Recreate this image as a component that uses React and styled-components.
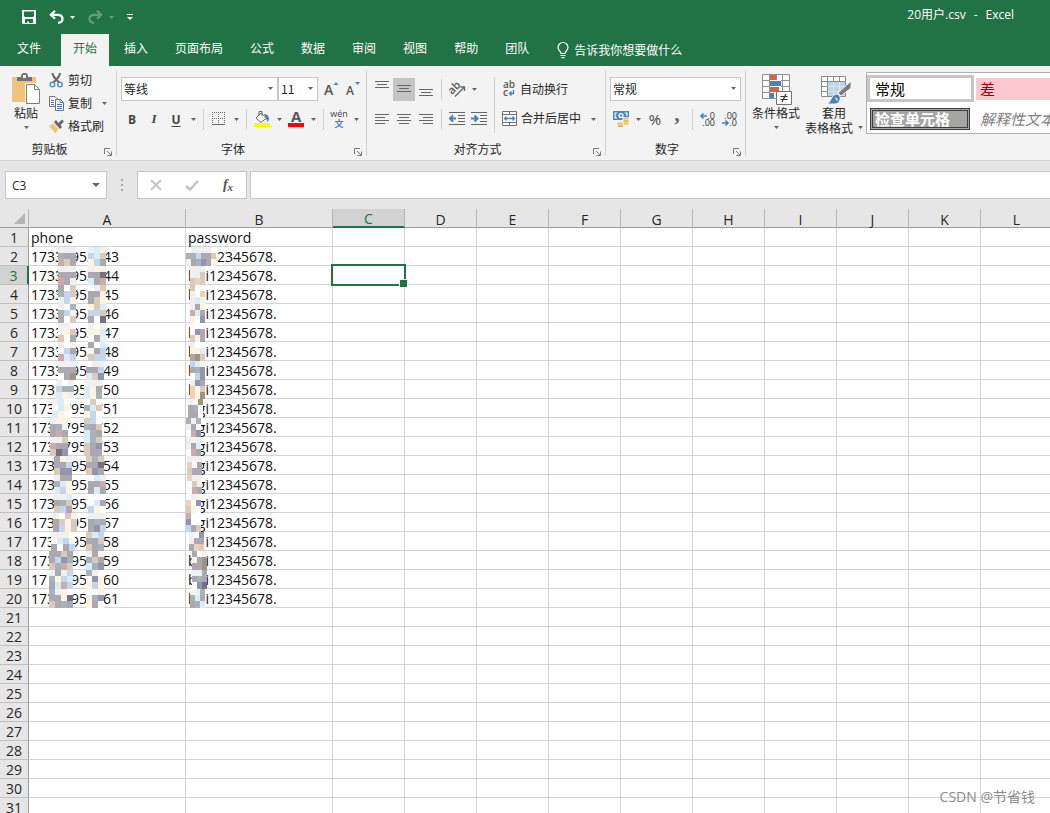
import React from "react";
import styled, { createGlobalStyle } from "styled-components";

const UI_FONT = `"Open Sans", "Noto Sans CJK SC", sans-serif`;
const CJK_FONT = `"Noto Sans CJK SC", sans-serif`;
const GREEN = "#217346";

const GlobalStyle = createGlobalStyle`
  * { box-sizing: border-box; }
  body { margin: 0; background: #e6e6e6; font: 12px/16px ${CJK_FONT}; color: #262626; overflow: hidden; }
  button, input, select { font: inherit; color: inherit; }
  button { border: 0; padding: 0; background: none; }
  svg { display: block; flex: none; overflow: visible; }
`;

const Window = styled.div`
  position: relative;
  display: flex;
  flex-direction: column;
  height: 100vh;
  overflow: hidden;
`;

/* title bar and tabs */
const Header = styled.header`
  background: ${GREEN};
  color: #fff;
`;
const TitleBar = styled.div`
  display: flex;
  align-items: center;
  justify-content: space-between;
  height: 34px;
  padding: 0 36px 4px 22px;
`;
const QuickAccess = styled.div`
  display: flex;
  align-items: center;
  gap: 13px;
  padding-top: 4px;
`;
const QuickButton = styled.button`
  display: flex;
  align-items: center;
  gap: 6px;
  opacity: ${(p) => (p.disabled ? 0.3 : 1)};
  color: #fff;
`;
const DocTitle = styled.div`
  display: flex;
  gap: 8px;
  font-family: ${UI_FONT};
`;
const Tabs = styled.nav`
  display: flex;
  height: 32px;
  padding-left: 5px;
  gap: 3px;
`;
const Tab = styled.button`
  padding: 0 12px 4px;
  margin-right: ${(p) => (p.$first ? 5 : 0)}px;
  background: ${(p) => (p.$active ? "#f3f3f3" : "none")};
  color: ${(p) => (p.$active ? GREEN : "#fff")};
`;
const TellMe = styled.button`
  display: flex;
  align-items: center;
  gap: 5px;
  margin-left: 13px;
  color: #fff;
`;

/* ribbon */
const Ribbon = styled.section`
  display: flex;
  height: 95px;
  background: #f3f3f3;
  border-bottom: 1px solid #d2d2d2;
  overflow: hidden;
`;
const Group = styled.div`
  display: flex;
  flex-direction: column;
  flex: none;
  width: ${(p) => p.$width}px;
  height: 86px;
  margin-top: 4px;
  border-right: 1px solid #d2d2d2;
`;
const GroupBody = styled.div`
  display: flex;
  flex: 1;
  padding-left: 4px;
`;
const GroupFooter = styled.div`
  display: flex;
  align-items: center;
  height: 14px;
  padding-right: 4px;
`;
const GroupLabel = styled.span`
  flex: 1;
  text-align: center;
`;
const Launcher = styled.button`
  padding: 6px 0 0 5px;
`;
const Stack = styled.div`
  display: flex;
  flex-direction: column;
  gap: 7px;
  padding-top: 7px;
`;
const ToolRow = styled.div`
  display: flex;
  align-items: center;
  height: ${(p) => p.$h || 24}px;
`;
const Tool = styled.button`
  display: flex;
  align-items: center;
  justify-content: center;
  width: 22px;
  height: 23px;
  background: ${(p) => (p.$on ? "#c5c5c5" : "none")};
  color: #444;
`;
const LetterTool = styled(Tool)`
  font: ${(p) => p.$italic ? `italic 700 13px "Liberation Serif", serif` : `700 12px ${UI_FONT}`};
  text-decoration: ${(p) => (p.$underline ? "underline" : "none")};
  text-underline-offset: 2px;
`;
const PercentTool = styled(Tool)`
  font: 400 15px ${UI_FONT};
`;
const CommaTool = styled(Tool)`
  padding-bottom: 10px;
  color: #666;
  font: 700 22px "Liberation Serif", serif;
`;
const SizeTools = styled.span`
  display: flex;
  margin-left: 2px;
`;
const MoreButton = styled.button`
  display: flex;
  align-items: center;
  justify-content: center;
  width: 12px;
  height: 22px;
`;
const Rule = styled.i`
  width: 1px;
  height: ${(p) => p.$h || 21}px;
  margin: 0 4px;
  background: #d2d2d2;
`;
const SelectBox = styled.span`
  position: relative;
  width: ${(p) => p.$width}px;
  height: 24px;
  svg { position: absolute; right: 5px; top: 10px; pointer-events: none; }
`;
const Select = styled.select`
  appearance: none;
  width: 100%;
  height: 100%;
  padding: 0 0 0 2px;
  border: 1px solid #c6c6c6;
  border-radius: 0;
  background: #fff;
`;
const LargeButton = styled.button`
  display: flex;
  flex-direction: column;
  align-items: center;
  flex: none;
  width: ${(p) => p.$width}px;
  padding-top: ${(p) => p.$top || 3}px;
  line-height: 15px;
`;
const LargeLabel = styled.span`
  display: flex;
  align-items: center;
  gap: 5px;
  height: 15px;
  white-space: nowrap;
`;
const TableIconBox = styled.span`
  padding: 2px 0 0 4px;
`;
const SmallList = styled.div`
  display: flex;
  flex-direction: column;
  gap: 3px;
  margin-left: 1px;
`;
const SmallButton = styled.button`
  display: flex;
  align-items: center;
  gap: 4px;
  height: 20px;
  padding-left: ${(p) => p.$left || 0}px;
  white-space: nowrap;
`;
const TrailingChevron = styled.span`
  margin-left: 6px;
`;
const MergeCell = styled.span`
  display: flex;
  gap: 6px;
`;
const StylesArea = styled.div`
  display: flex;
  flex: 1;
  min-width: 0;
`;
const Gallery = styled.div`
  display: grid;
  grid-template-columns: 107px 1fr;
  flex: 1;
  height: 62px;
  margin: 6px 0 0 4px;
  padding-top: 2px;
  border: 1px solid #b0b0b0;
  border-right: 0;
  background: #fff;
  overflow: hidden;
`;
const StyleCell = styled.button`
  height: 22px;
  margin: ${(p) => p.$margin || "0"};
  padding: 0 4px;
  text-align: left;
  font-size: 15px;
  line-height: 18px;
  white-space: nowrap;
`;
const NormalStyle = styled(StyleCell)`
  height: 27px;
  padding: 0 5px;
  border: 3px solid #c6c6c6;
  color: #000;
`;
const BadStyle = styled(StyleCell)`
  background: #ffc7ce;
  color: #9c0006;
`;
const CheckStyle = styled(StyleCell)`
  padding: 0 2px;
  border: 3px double #3f3f3f;
  background: #a5a5a5;
  color: #fff;
  font-weight: 700;
  line-height: 14px;
`;
const NoteStyle = styled(StyleCell)`
  color: #7f7f7f;
  font-style: italic;
  line-height: 14px;
`;

/* formula bar */
const FormulaBar = styled.section`
  display: flex;
  align-items: center;
  height: 48px;
  padding: 0 0 0 5px;
`;
const NameBox = styled.label`
  display: flex;
  align-items: center;
  width: 102px;
  height: 28px;
  padding: 0 6px;
  border: 1px solid #c6c6c6;
  background: #fff;
`;
const NameInput = styled.input`
  flex: 1;
  min-width: 0;
  padding: 0;
  border: 0;
  font: 12px ${UI_FONT};
`;
const Grip = styled.div`
  display: flex;
  flex-direction: column;
  gap: 3px;
  margin: 0 14px;
  i { width: 2px; height: 2px; background: #a8a8a8; }
`;
const FormulaButtons = styled.div`
  display: flex;
  height: 28px;
  border: 1px solid #c6c6c6;
  background: #fff;
`;
const FormulaButton = styled.button`
  display: flex;
  align-items: center;
  justify-content: center;
  width: 36px;
  color: #555;
  font: italic 700 14px "Liberation Serif", serif;
  small { font-size: 11px; padding-top: 3px; }
`;
const FormulaInput = styled.input`
  flex: 1;
  height: 28px;
  margin-left: 3px;
  border: 1px solid #c6c6c6;
  border-right: 0;
  background: #fff;
`;

/* worksheet */
const SheetArea = styled.main`
  flex: 1;
  min-height: 0;
  overflow: hidden;
`;
const Sheet = styled.table`
  table-layout: fixed;
  width: 100%;
  min-width: 1053px;
  border-collapse: separate;
  border-spacing: 0;
  font: 400 14px/16px ${UI_FONT};
  color: #111;
`;
const ColHead = styled.th`
  height: 19px;
  padding: 2px 0 0;
  line-height: 15px;
  font-weight: inherit;
  background: ${(p) => (p.$on ? "#d2d2d2" : "#e6e6e6")};
  color: ${(p) => (p.$on ? GREEN : "#262626")};
  border-right: 1px solid #b5b5b5;
  border-bottom: ${(p) => (p.$on ? `2px solid ${GREEN}` : "1px solid #9b9b9b")};
`;
const Corner = styled(ColHead)`
  padding: 0 3px 0 0;
  svg { margin-left: auto; }
`;
const RowHead = styled.th`
  height: 19px;
  padding: 2px 0 0;
  font-weight: inherit;
  background: ${(p) => (p.$on ? "#d2d2d2" : "#e6e6e6")};
  color: ${(p) => (p.$on ? GREEN : "#262626")};
  border-right: ${(p) => (p.$on ? `2px solid ${GREEN}` : "1px solid #9b9b9b")};
  border-bottom: 1px solid #c0c0c0;
`;
const Cell = styled.td`
  position: relative;
  height: 19px;
  padding: 2px 2px 0;
  background: #fff;
  border-right: 1px solid #d4d4d4;
  border-bottom: 1px solid #d4d4d4;
  white-space: nowrap;
`;
const Selection = styled.div`
  position: absolute;
  inset: -2px;
  z-index: 2;
  border: 2px solid ${GREEN};
  &::after {
    content: "";
    position: absolute;
    right: -4px;
    bottom: -4px;
    width: 7px;
    height: 7px;
    border: 1px solid #fff;
    background: ${GREEN};
  }
`;
const Hidden = styled.span`
  display: inline-block;
  width: 8px;
`;
const Prefix = styled.span`
  display: inline-flex;
  justify-content: space-between;
  width: 21px;
  height: 16px;
  vertical-align: top;
`;
const MaskLayer = styled.svg`
  position: absolute;
  left: 0;
  top: 0;
  z-index: 1;
`;
const Watermark = styled.div`
  position: absolute;
  right: 15px;
  bottom: 6px;
  z-index: 3;
  font: 14px/20px ${UI_FONT};
  color: #8c8c8c;
`;

/* small drawings */
const Chevron = ({ w = 5, color = "#666" }) => (
  <svg width={w} height={Math.ceil(w / 2)} viewBox="0 0 6 3" preserveAspectRatio="none">
    <path d="M0 0H6L3 3Z" fill={color} />
  </svg>
);
const LinesIcon = ({ rows }) => (
  <svg width="14" height="17" viewBox="0 0 14 17" stroke="#666">
    {rows.map(([x, y, w]) => <path key={y} d={`M${x} ${y + 0.5}h${w}`} />)}
  </svg>
);
const SaveIcon = () => (
  <svg width="14" height="14" viewBox="0 0 14 14">
    <path fillRule="evenodd" fill="#fff" d="M0 0H14V14H1L0 13ZM2 1.5V6L3 7H11L12 6V1.5ZM3 9V13H5V11.5H7V13H11V9Z" />
  </svg>
);
const UndoIcon = ({ flip }) => (
  <svg width="15" height="14" viewBox="0 0 15 14" fill="none" stroke="#fff" strokeWidth="2.2">
    <g transform={flip ? "translate(15 0) scale(-1 1)" : undefined}>
      <path d="M6 .8 1.8 4.8 6 8.8M2 4.8H8.5C12 4.8 13.5 6.5 13.5 8.8S12 12.8 9 12.8" />
    </g>
  </svg>
);
const CustomizeIcon = () => (
  <svg width="6" height="7" viewBox="1 0 6 7" fill="#fff"><path d="M1 0h6v1H1zM1 3H7L4 6Z" /></svg>
);
const BulbIcon = () => (
  <svg width="12" height="17" viewBox="0 0 12 17" fill="none" stroke="#fff" strokeWidth="1.2">
    <path d="M4 11.5C4 9 1 8.500 1 5.500A5 5 0 0 1 11 5.500C11 8.500 8 9 8 11.500ZM3.500 13.500h5M4.500 15.700h3" />
  </svg>
);
const LaunchIcon = () => (
  <svg width="8" height="8" viewBox="0 0 8 8" fill="none" stroke="#777">
    <path d="M.5 6V.5H6M3 3l4 4M7.500 3.500V7.500H3.500" />
  </svg>
);
const PasteIcon = () => (
  <svg width="28" height="32" viewBox="1 0 28 32">
    <path fill="#ecc47c" d="M1 4H25V29H1Z" />
    <path fill="#737373" d="M6 8V4H10V2L12 0H15L17 2V4H21V8Z" />
    <path fill="#f3f3f3" d="M12 2h3v3h-3z" />
    <path fill="#fff" stroke="#f3f3f3" strokeWidth="3" d="M15.500 11.500H24L28.500 16V30.500H15.500Z" />
    <path fill="#fff" stroke="#808080" d="M15.500 11.500H23.500L28.500 16.500V30.500H15.500ZM23.500 11.500V16.500H28.500" />
  </svg>
);
const CutIcon = () => (
  <svg width="15" height="16" viewBox="0 0 15 16" fill="none">
    <path stroke="#666" strokeWidth="2" d="M3.500 1C3.500 4 5.500 6 10 10.500M11 1C11 4 9 6 4.500 10.500" />
    <circle cx="3.500" cy="12.500" r="2.300" stroke="#4a86bf" strokeWidth="1.300" />
    <circle cx="11" cy="12.500" r="2.300" stroke="#4a86bf" strokeWidth="1.300" />
  </svg>
);
const CopyIcon = () => (
  <svg width="15" height="15" viewBox="0 0 15 15" fill="#fff" stroke="#737373">
    <path d="M.5.5H6L8.500 3V10.500H.5Z" />
    <path stroke="#4a7ebb" d="M2 4.500h3M2 6.500h3M2 8.500h3" />
    <path d="M6.500 3.500H11.500L14.500 6.500V14.500H6.500ZM11 3.500V6.500H14.500" />
    <path stroke="#4a7ebb" d="M8 8.500h5M8 10.500h5M8 12.500h5" />
  </svg>
);
const PainterIcon = () => (
  <svg width="15" height="15" viewBox="0 0 15 15">
    <path fill="#ecc47c" d="M0 7 5 4 10 9 6.500 14.500Z" />
    <path fill="#666" d="M5 3 7 1 9.500 4 13 .5 15 2.500 11.500 6 13 8 11 10Z" />
    <path stroke="#f3f3f3" d="M4 4.500 10.500 10.500" />
  </svg>
);
const FontSizeIcon = ({ down }) => (
  <svg width="15" height="17" viewBox="0 0 15 17">
    <text x="0" y="14" fontFamily="Open Sans" fontWeight="600" fontSize={down ? 12 : 14} fill="#555">A</text>
    <path fill="#4a7ebb" d={down ? "M9 1H14L11.500 4Z" : "M9.500 4H14.500L12 1Z"} />
  </svg>
);
const BorderIcon = () => (
  <svg width="14" height="14" viewBox="0 0 14 14" fill="none" stroke="#666">
    <path strokeDasharray="1 1" d="M0 .5H14M0 6.500H13M.5 0V13M6.500 0V13M12.500 0V13" />
    <path d="M0 12.500H13" />
  </svg>
);
const FillIcon = () => (
  <svg width="18" height="18" viewBox="0 0 18 18" fill="none">
    <path fill="#4a7ebb" d="M11 4C15 4 17 7 15 12L13 9Z" />
    <path fill="#fff" stroke="#666" d="M8 3 13.500 8 8 12.500 3 8ZM6 6V1.500H9V6" />
    <path fill="#ff0" d="M1 13h16v4H1z" />
  </svg>
);
const FontColorIcon = () => (
  <svg width="18" height="18" viewBox="0 0 18 18">
    <text x="4" y="12" fontFamily="Open Sans" fontWeight="700" fontSize="15" fill="#595959">A</text>
    <path fill="#f00" d="M1 13h16v4H1z" />
  </svg>
);
const PhoneticIcon = () => (
  <svg width="18" height="18" viewBox="0 0 18 18">
    <text x="9" y="7" textAnchor="middle" fontFamily="Open Sans" fontSize="9" fill="#444">wén</text>
    <text x="9" y="17" textAnchor="middle" fontFamily="Noto Sans CJK SC" fontWeight="700" fontSize="9" fill="#4a7ebb">文</text>
  </svg>
);
const RotateIcon = () => (
  <svg width="17" height="17" viewBox="0 0 17 17">
    <text x="0" y="11" transform="rotate(-45 5 9)" fontFamily="Open Sans" fontWeight="600" fontSize="11" fill="#555">ab</text>
    <path fill="none" stroke="#666" strokeWidth="1.300" d="M6 15.500 15 6.500M11.500 6H15.500V10" />
  </svg>
);
const IndentIcon = ({ right }) => (
  <svg width="16" height="14" viewBox="0 0 16 14" fill="none">
    <path stroke="#666" d="M0 .5H16M9 3.500H16M9 6.500H16M9 9.500H16M0 12.500H16" />
    <path stroke="#4a7ebb" strokeWidth="2" d={right ? "M0 6.500H6M3.500 3.500 6.500 6.500 3.500 9.500" : "M7 6.500H1M4 3.500 1 6.500 4 9.500"} />
  </svg>
);
const WrapIcon = () => (
  <svg width="14" height="16" viewBox="0 0 14 16" fontFamily="Open Sans" fontWeight="600" fontSize="10" fill="#595959">
    <text x="1" y="7">ab</text>
    <text x="1" y="15">c</text>
    <path fill="none" stroke="#4a7ebb" strokeWidth="1.300" d="M11.500 9V12.500H7.500M9.500 10.500 7.500 12.500 9.500 14.500" />
  </svg>
);
const MergeIcon = () => (
  <svg width="15" height="15" viewBox="0 0 15 15" fill="none" stroke="#737373">
    <path fill="#fff" d="M.5.5H14.500V14.500H.5ZM0 3.500H15M0 11.500H15M7.500 0V3.500M7.500 11.500V15" />
    <path stroke="#4a7ebb" strokeWidth="1.300" d="M2.500 7.500H12.500M4.500 5.500 2.500 7.500 4.500 9.500M10.500 5.500 12.500 7.500 10.500 9.500" />
  </svg>
);
const CurrencyIcon = () => (
  <svg width="17" height="16" viewBox="0 0 17 16">
    <path fill="#4a86bf" d="M0 0H16V9H0Z" />
    <path fill="#fff" d="M1.500 1.500H4.500L2.500 3.500V5.500L4.500 7.500H1.500ZM14.500 1.500H11.500L13.500 3.500V5H14.500Z" />
    <circle cx="8" cy="4.500" r="2.600" fill="#fff" /><circle cx="8" cy="4.500" r="1.200" fill="#4a86bf" />
    <path fill="#f3f3f3" d="M9.500 6H17V16H3.500V11H9.500Z" />
    <path stroke="#ecb96c" strokeWidth="2" d="M10.500 7.500h5M10.500 10h5M4.500 12.500h5M10.500 12.500h5M5 15h5" />
  </svg>
);
const DecimalIcon = ({ less }) => (
  <svg width="16" height="15" viewBox="0 0 16 15" fontFamily="Open Sans" fontSize="9" fill="#333">
    <text x="15" y="7" textAnchor="end">{less ? ".00" : ".0"}</text>
    <text x="15" y="14" textAnchor="end">{less ? ".0" : ".00"}</text>
    <path fill="none" stroke="#4a7ebb" strokeWidth="1.600" d={less ? "M0 11H6M3.500 8.500 6 11 3.500 13.500" : "M7 4H1M3.500 1.500 1 4 3.500 6.500"} />
  </svg>
);
const ConditionalIcon = () => (
  <svg width="28" height="31" viewBox="0 0 28 31" fill="none">
    <path fill="#fff" d="M.5.5H28V24H.5Z" />
    <path fill="#db6243" d="M8 1h6v5H8zM8 13h9v5H8z" />
    <path fill="#4a82b8" d="M8 7h11v5H8zM8 19h4v5H8z" />
    <path stroke="#909090" d="M.5.5H27.500V24.500H.5ZM0 6.500H8M19 6.500H28M0 12.500H8M19 12.500H28M0 18.500H8M17 18.500H28M7.500 0V25M14.500 0V6M20.500 0V25" />
    <path fill="#fff" stroke="#737373" d="M14.500 17.500H29.500V30.500H14.500Z" />
    <path stroke="#333" strokeWidth="1.200" d="M18.500 22.500h7M18.500 25.500h7M24 20l-4 8" />
  </svg>
);
const FormatTableIcon = () => (
  <svg width="30" height="29" viewBox="0 0 30 29" fill="none">
    <path fill="#fff" d="M.5.5H25V21H.5Z" />
    <path fill="#bdd3ec" d="M7 6h18v15H7z" />
    <path stroke="#8c8c8c" d="M.5.5H24.500V20.500H.5ZM0 5.500H25M0 10.500H7M0 15.500H7M6.500 0V21M12.500 0V6M18.500 0V6" />
    <path stroke="#dbe7f4" d="M7 10.500H24M7 15.500H24M12.500 6V20M18.500 6V20" />
    <path fill="#7a7a7a" stroke="#f3f3f3" d="M30 5V12L20 20 17 17Z" />
    <path fill="#4a82b8" stroke="#f3f3f3" d="M6 28C10 27 10 18 16 18C21 19 20 28 14 28Z" />
    <path stroke="#fff" d="M14 22q3 0 2 3" />
  </svg>
);

/* mosaic blocks that hide part of the values; one letter is one block */
const SHADES = {
  w: "#ffffff", g: "#f0f0f0", a: "#a9a9ae", p: "#aea6b2", b: "#c5d5ea", t: "#d8cabc",
  c: "#dcecf4", e: "#fbf4e4", k: "#77707e", r: "#c9adad", o: "#efd0b8", s: "#a7b3b8",
  n: "#9a9682", d: "#9395ad",
};
const Mask = ({ parts, block = 6 }) => (
  <MaskLayer width="100" height="19" shapeRendering="crispEdges" aria-hidden="true">
    {parts.map(([x, lines]) =>
      lines.split("/").map((line, r) =>
        [...line].map((ch, c) => (
          <rect key={`${x}-${r}-${c}`} x={x + c * block} y={r * 6} width={block} height={r === 2 ? 7 : 6} fill={SHADES[ch]} />
        ))
      )
    )}
  </MaskLayer>
);

/* [visible start, hidden digits, middle, hidden digits, end, first mask, second mask, password prefix, password mask] */
const DATA = [
  ["1733", 1, "953", 1, "43", [29, "ggg/spp/rta"], [59, "gcg/bct/eba"], ["", ""], [0, "wggggw/ssbpat/gasdpe"]],
  ["1733", 1, "953", 1, "44", [29, "ggg/apa/rag"], [59, "geg/pak/cpr"], ["b", "i"], [4, "ggg/ggt/tot"]],
  ["1733", 1, "953", 1, "45", [29, "awt/sbt/gbe"], [59, "wgt/pae/ate"], ["b", "i"], [4, "tww/gwo/gce"]],
  ["1733", 1, "953", 1, "46", [29, "gws/sbg/pwt"], [59, "etc/bbt/awk"], ["", "i"], [4, "gae/rcp/ewd"]],
  ["1733", 1, "953", 1, "47", [29, "ggw/wet/twa"], [59, "gwg/eec/wag"], ["b", "i"], [4, "www/wdp/tep"]],
  ["1733", 1, "953", 1, "48", [29, "gwe/wba/rcb"], [59, "awc/eab/tbb"], ["b", "i"], [4, "gww/eec/ant"]],
  ["1733", 1, "95", 1, "749", [29, "ggg/apa/wan"], [57, "wgg/apb/ctd"], ["b", "i"], [4, "bce/asd/wbd"]],
  ["173", 2, "95", 1, "750", [27, "gwg/bss/ceg"], [55, "ggg/cea/ces"], ["b", "i"], [4, "gda/oet/oen"]],
  ["173", 1, "795", 1, "751", [23, "gcw/wce/cew"], [55, "wtw/sct/ebw"], ["", "gi"], [2, "gwn/asw/apw"]],
  ["173", 1, "795", 1, "752", [21, "gee/asg/pra"], [55, "tbw/spt/csa"], ["", "gi"], [0, "sgs/gpw/wrd"]],
  ["173", 1, "795", 1, "753", [21, "ggt/rpa/tkd"], [55, "cst/tad/tpa"], ["", "gi"], [0, "ggg/gpc/wra"]],
  ["173", 2, "95", 2, "54", [25, "aeg/ppb/tdd"], [57, "tst/apk/tda"], ["", "gi"], [1, "ggg/owp/tpa"]],
  ["173", 2, "953", 1, "55", [25, "gap/sce/cbe"], [59, "wcg/apr/aca"], ["", "gi"], [1, "ogg/wtg/wrp"]],
  ["173", 2, "953", 1, "56", [25, "ggc/ast/tbp"], [59, "www/wcp/bew"], ["", "gi"], [0, "wge/owd/tew"]],
  ["173", 2, "95", 2, "57", [24, "gwte/atet/pbet"], [59, "ggg/asa/adb"], ["", "gi"], [0, "rww/dww/bpt"]],
  ["173", 2, "95", 2, "58", [22, "gggw/wcbe/awpb"], [57, "tcb/aat/tas"], ["", "i"], [3, "gwd/gap/aot"]],
  ["173", 2, "95", 2, "59", [20, "apta/abds/tsrt"], [57, "gpe/sta/csd"], ["b", "i"], [6, "awg/ean/ppn"]],
  ["17", 3, "95", 2, "60", [20, "gagb/sebc/pcrb"], [57, "sgw/wde/ebe"], ["b", "i"], [6, "gga/psa/wdk"]],
  ["173", 2, "95", 2, "61", [20, "sgew/aaek/tasa"], [57, "wwe/gsd/epw"], ["b", "i"], [4, "wgs/sca/psc"]],
];

const COLUMNS = "ABCDEFGHIJKL".split("");
const WIDTHS = [157, 147, 72, 72, 72, 72, 72, 72, 72, 72, 72];

const Gap = ({ count }) => Array.from({ length: count }, (_, i) => <Hidden key={i} />);

const PhoneValue = ({ row }) => (
  <>
    {row[0]}<Gap count={row[1]} />{row[2]}<Gap count={row[3]} />{row[4]}
    <Mask parts={[row[5], row[6]]} />
  </>
);

const PasswordValue = ({ row }) => (
  <>
    <Prefix><span>{row[7][0]}</span><span>{row[7][1]}</span></Prefix>12345678.
    <Mask parts={[row[8]]} block={5} />
  </>
);

const More = ({ label }) => <MoreButton aria-label={label}><Chevron /></MoreButton>;

const Footer = ({ label }) => (
  <GroupFooter>
    <GroupLabel>{label}</GroupLabel>
    <Launcher aria-label={`${label}设置`}><LaunchIcon /></Launcher>
  </GroupFooter>
);

export default function App() {
  return (
    <Window>
      <GlobalStyle />
      <Header>
        <TitleBar>
          <QuickAccess>
            <QuickButton aria-label="保存"><SaveIcon /></QuickButton>
            <QuickButton aria-label="撤消"><UndoIcon /><Chevron color="#fff" /></QuickButton>
            <QuickButton aria-label="恢复" disabled><UndoIcon flip /><Chevron color="#fff" /></QuickButton>
            <QuickButton aria-label="自定义快速访问工具栏"><CustomizeIcon /></QuickButton>
          </QuickAccess>
          <DocTitle><span>20用户.csv</span><span>-</span><span>Excel</span></DocTitle>
        </TitleBar>
        <Tabs>
          {["文件", "开始", "插入", "页面布局", "公式", "数据", "审阅", "视图", "帮助", "团队"].map((t, i) => (
            <Tab key={t} $first={i === 0} $active={i === 1}>{t}</Tab>
          ))}
          <TellMe><BulbIcon />告诉我你想要做什么</TellMe>
        </Tabs>
      </Header>

      <Ribbon>
        <Group $width={117}>
          <GroupBody>
            <LargeButton $width={44}>
              <PasteIcon />
              <LargeLabel>粘贴</LargeLabel>
              <LargeLabel><Chevron /></LargeLabel>
            </LargeButton>
            <SmallList>
              <SmallButton><CutIcon />剪切</SmallButton>
              <SmallButton><CopyIcon />复制<TrailingChevron><Chevron /></TrailingChevron></SmallButton>
              <SmallButton><PainterIcon />格式刷</SmallButton>
            </SmallList>
          </GroupBody>
          <Footer label="剪贴板" />
        </Group>

        <Group $width={250}>
          <GroupBody>
            <Stack>
              <ToolRow>
                <SelectBox $width={157}><Select aria-label="字体"><option>等线</option></Select><Chevron /></SelectBox>
                <SelectBox $width={40}><Select aria-label="字号"><option>11</option></Select><Chevron /></SelectBox>
                <SizeTools>
                  <Tool aria-label="增大字号"><FontSizeIcon /></Tool>
                  <Tool aria-label="减小字号"><FontSizeIcon down /></Tool>
                </SizeTools>
              </ToolRow>
              <ToolRow $h={22}>
                <LetterTool aria-label="加粗">B</LetterTool>
                <LetterTool aria-label="倾斜" $italic>I</LetterTool>
                <LetterTool aria-label="下划线" $underline>U</LetterTool>
                <More label="下划线样式" />
                <Rule />
                <Tool aria-label="边框"><BorderIcon /></Tool>
                <More label="边框样式" />
                <Rule />
                <Tool aria-label="填充颜色"><FillIcon /></Tool>
                <More label="更多填充颜色" />
                <Tool aria-label="字体颜色"><FontColorIcon /></Tool>
                <More label="更多字体颜色" />
                <Rule />
                <Tool aria-label="拼音"><PhoneticIcon /></Tool>
                <More label="拼音选项" />
              </ToolRow>
            </Stack>
          </GroupBody>
          <Footer label="字体" />
        </Group>

        <Group $width={239}>
          <GroupBody>
            <Stack>
              <ToolRow>
                <Tool aria-label="顶端对齐"><LinesIcon rows={[[0, 0, 14], [2, 3, 10], [0, 6, 14]]} /></Tool>
                <Tool aria-label="垂直居中" $on><LinesIcon rows={[[0, 4, 14], [2, 7, 10], [0, 10, 14]]} /></Tool>
                <Tool aria-label="底端对齐"><LinesIcon rows={[[0, 8, 14], [2, 11, 10], [0, 14, 14]]} /></Tool>
                <Rule />
                <Tool aria-label="方向"><RotateIcon /></Tool>
                <More label="方向选项" />
              </ToolRow>
              <ToolRow $h={22}>
                <Tool aria-label="左对齐"><LinesIcon rows={[[0, 3, 14], [0, 6, 10], [0, 9, 14], [0, 12, 10]]} /></Tool>
                <Tool aria-label="居中"><LinesIcon rows={[[0, 3, 14], [2, 6, 10], [0, 9, 14], [2, 12, 10]]} /></Tool>
                <Tool aria-label="右对齐"><LinesIcon rows={[[0, 3, 14], [4, 6, 10], [0, 9, 14], [4, 12, 10]]} /></Tool>
                <Rule />
                <Tool aria-label="减少缩进量"><IndentIcon /></Tool>
                <Tool aria-label="增加缩进量"><IndentIcon right /></Tool>
              </ToolRow>
            </Stack>
            <ToolRow $h={70}><Rule $h={56} /></ToolRow>
            <Stack>
              <ToolRow><SmallButton $left={3}><WrapIcon />自动换行</SmallButton></ToolRow>
              <ToolRow $h={22}>
                <MergeCell>
                  <SmallButton $left={3}><MergeIcon />合并后居中</SmallButton>
                  <More label="合并选项" />
                </MergeCell>
              </ToolRow>
            </Stack>
          </GroupBody>
          <Footer label="对齐方式" />
        </Group>

        <Group $width={140}>
          <GroupBody>
            <Stack>
              <ToolRow>
                <SelectBox $width={131}><Select aria-label="数字格式"><option>常规</option></Select><Chevron /></SelectBox>
              </ToolRow>
              <ToolRow $h={22}>
                <Tool aria-label="会计数字格式"><CurrencyIcon /></Tool>
                <More label="会计格式选项" />
                <PercentTool aria-label="百分比样式">%</PercentTool>
                <CommaTool aria-label="千位分隔样式">,</CommaTool>
                <Rule />
                <Tool aria-label="增加小数位数"><DecimalIcon /></Tool>
                <Tool aria-label="减少小数位数"><DecimalIcon less /></Tool>
              </ToolRow>
            </Stack>
          </GroupBody>
          <Footer label="数字" />
        </Group>

        <StylesArea>
          <LargeButton $width={60} $top={8}>
            <ConditionalIcon />
            <LargeLabel>条件格式</LargeLabel>
            <LargeLabel><Chevron /></LargeLabel>
          </LargeButton>
          <LargeButton $width={56} $top={8}>
            <TableIconBox><FormatTableIcon /></TableIconBox>
            <LargeLabel>套用</LargeLabel>
            <LargeLabel>表格格式<Chevron /></LargeLabel>
          </LargeButton>
          <Gallery>
            <NormalStyle>常规</NormalStyle>
            <BadStyle $margin="3px 0 0 2px">差</BadStyle>
            <CheckStyle $margin="2px 4px 0 3px">检查单元格</CheckStyle>
            <NoteStyle $margin="2px 0 0 2px">解释性文本</NoteStyle>
          </Gallery>
        </StylesArea>
      </Ribbon>

      <FormulaBar>
        <NameBox>
          <NameInput aria-label="名称框" defaultValue="C3" />
          <Chevron w={8} />
        </NameBox>
        <Grip><i /><i /><i /></Grip>
        <FormulaButtons>
          <FormulaButton aria-label="取消">
            <svg width="12" height="12" viewBox="0 0 12 12" stroke="#c4c4c4" strokeWidth="1.800"><path d="M1 1 11 11M11 1 1 11" /></svg>
          </FormulaButton>
          <FormulaButton aria-label="输入">
            <svg width="14" height="11" viewBox="0 0 14 11" fill="none" stroke="#c4c4c4" strokeWidth="2.400"><path d="M1 6 5 9.500 13 1" /></svg>
          </FormulaButton>
          <FormulaButton aria-label="插入函数">f<small>x</small></FormulaButton>
        </FormulaButtons>
        <FormulaInput aria-label="编辑栏" />
      </FormulaBar>

      <SheetArea>
        <Sheet>
          <colgroup>
            <col width="29" />
            {WIDTHS.map((w, i) => <col key={i} width={w} />)}
            <col />
          </colgroup>
          <thead>
            <tr>
              <Corner aria-label="全选"><svg width="11" height="11"><path d="M11 0V11H0Z" fill="#b4b4b4" /></svg></Corner>
              {COLUMNS.map((c) => <ColHead key={c} scope="col" $on={c === "C"}>{c}</ColHead>)}
            </tr>
          </thead>
          <tbody>
            {Array.from({ length: 31 }, (_, i) => {
              const n = i + 1;
              const row = DATA[n - 2];
              return (
                <tr key={n}>
                  <RowHead scope="row" $on={n === 3}>{n}</RowHead>
                  <Cell>{n === 1 ? "phone" : row && <PhoneValue row={row} />}</Cell>
                  <Cell>{n === 1 ? "password" : row && <PasswordValue row={row} />}</Cell>
                  {COLUMNS.slice(2).map((c) => <Cell key={c}>{n === 3 && c === "C" && <Selection />}</Cell>)}
                </tr>
              );
            })}
          </tbody>
        </Sheet>
      </SheetArea>
      <Watermark>CSDN @节省钱</Watermark>
    </Window>
  );
}
